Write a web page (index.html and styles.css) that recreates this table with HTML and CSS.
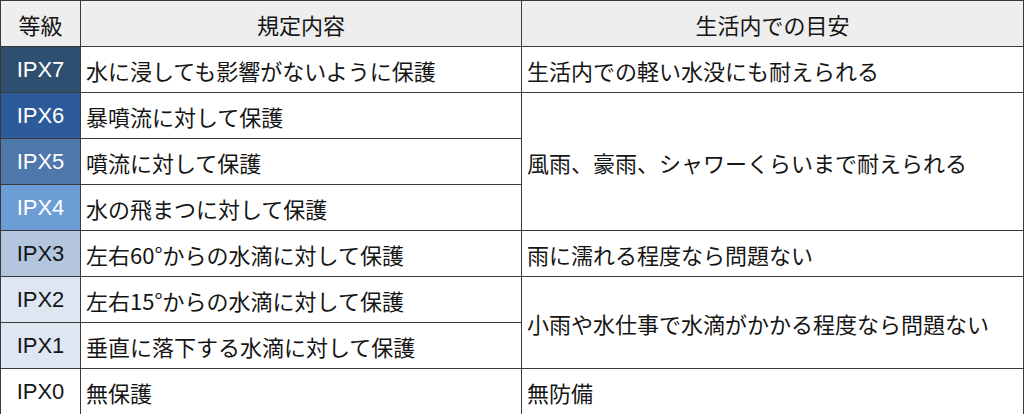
FILE: index.html
```html
<!DOCTYPE html>
<html lang="ja">
<head>
<meta charset="utf-8">
<link rel="stylesheet" href="styles.css">
</head>
<body>
<table class="ip">
  <colgroup>
    <col class="c1"><col class="c2"><col class="c3">
  </colgroup>
  <thead>
    <tr><th>等級</th><th>規定内容</th><th>生活内での目安</th></tr>
  </thead>
  <tbody>
    <tr><td class="lv l7">IPX7</td><td>水に浸しても影響がないように保護</td><td>生活内での軽い水没にも耐えられる</td></tr>
    <tr><td class="lv l6">IPX6</td><td>暴噴流に対して保護</td><td rowspan="3">風雨、豪雨、シャワーくらいまで耐えられる</td></tr>
    <tr><td class="lv l5">IPX5</td><td>噴流に対して保護</td></tr>
    <tr><td class="lv l4">IPX4</td><td>水の飛まつに対して保護</td></tr>
    <tr><td class="lv l3">IPX3</td><td>左右60°からの水滴に対して保護</td><td>雨に濡れる程度なら問題ない</td></tr>
    <tr><td class="lv l2">IPX2</td><td>左右15°からの水滴に対して保護</td><td rowspan="2">小雨や水仕事で水滴がかかる程度なら問題ない</td></tr>
    <tr><td class="lv l1">IPX1</td><td>垂直に落下する水滴に対して保護</td></tr>
    <tr><td class="lv l0">IPX0</td><td>無保護</td><td>無防備</td></tr>
  </tbody>
</table>
</body>
</html>
```
FILE: styles.css
```css
html, body {
  margin: 0;
  padding: 0;
  background: #ffffff;
}
.ip {
  border-collapse: collapse;
  width: 1023px;
  table-layout: fixed;
  font-family: "Noto Sans CJK JP", "Noto Sans", sans-serif;
  font-size: 22px;
  color: #151515;
}
.c1 { width: 80px; }
.c2 { width: 441px; }
.c3 { width: 502px; }
.ip tr {
  height: 46px;
}
.ip th, .ip td {
  border: 1px solid #3a3a3a;
  padding: 0 0 0 5px;
  line-height: 26px;
  vertical-align: middle;
  font-weight: normal;
  white-space: nowrap;
}
.ip th {
  background: #eeeeee;
  text-align: center;
  padding: 0;
}
.ip td.lv {
  text-align: center;
  padding: 0;
  font-family: "Liberation Sans", "Noto Sans CJK JP", sans-serif;
  font-size: 22px;
}
.l7 { background: #2e4f6f; color: #ffffff; }
.l6 { background: #2c5a9a; color: #ffffff; }
.l5 { background: #4e77ab; color: #ffffff; }
.l4 { background: #6c9dd5; color: #ffffff; }
.l3 { background: #b3c6de; }
.l2 { background: #dde6f1; }
.l1 { background: #dde6f1; }
.l0 { background: #ffffff; }
```
